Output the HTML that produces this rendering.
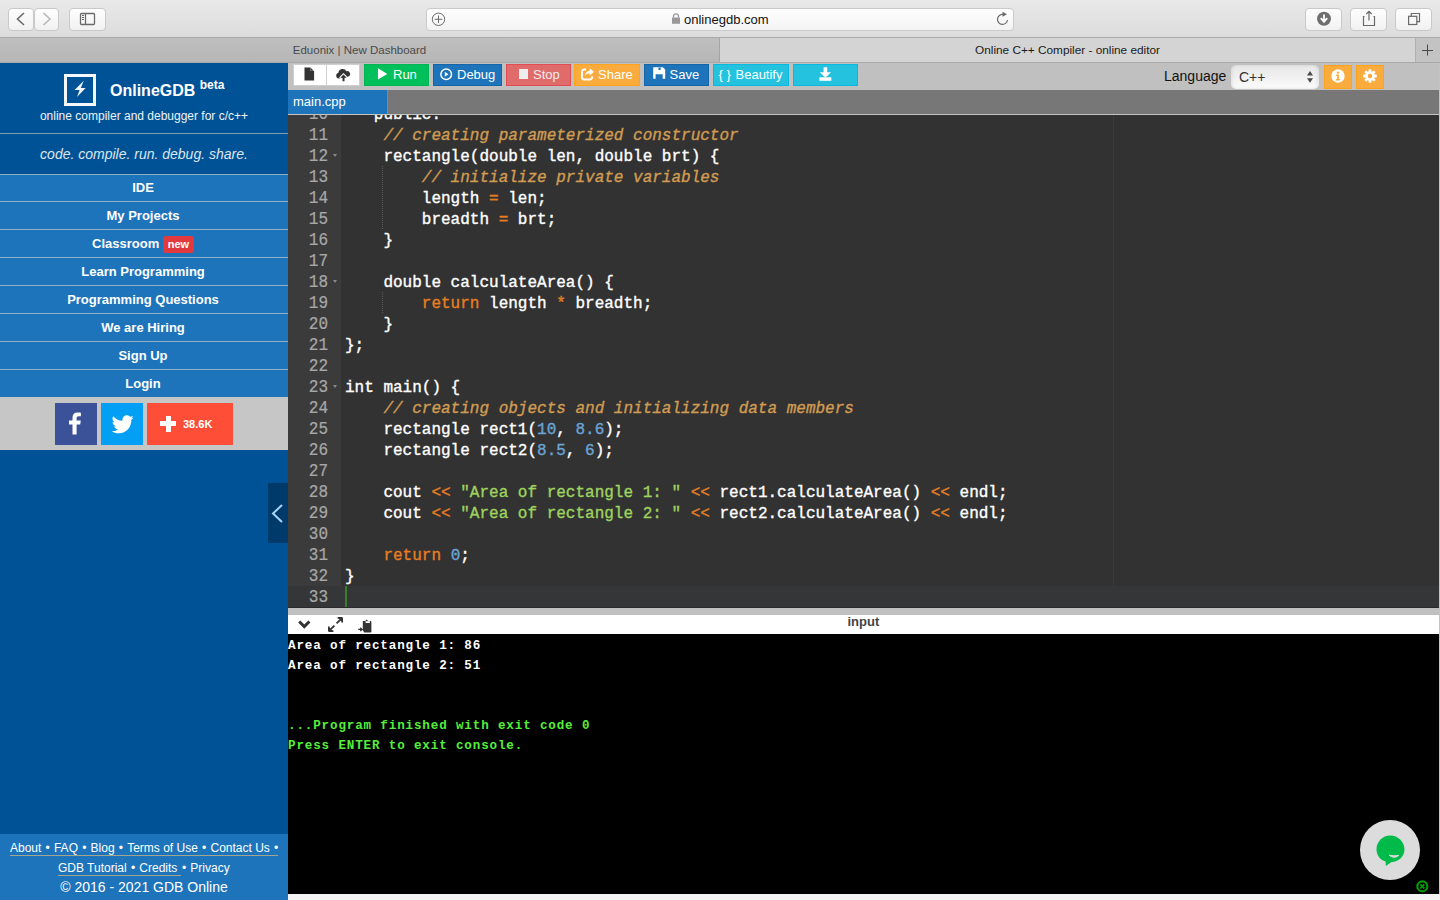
<!DOCTYPE html>
<html><head><meta charset="utf-8">
<style>
*{box-sizing:border-box;margin:0;padding:0}
html,body{width:1440px;height:900px;overflow:hidden;background:#000;font-family:"Liberation Sans",sans-serif}
.a{position:absolute}
/* safari chrome */
#tb{left:0;top:0;width:1440px;height:38px;background:linear-gradient(#e9e9e9,#dcdcdc);border-bottom:1px solid #ababab}
.sbtn{position:absolute;top:8px;height:23px;border:1px solid #c9c9c9;border-radius:4px;background:linear-gradient(#fefefe,#f1f1f1)}
#url{left:426px;top:8px;width:588px;height:23px;border:1px solid #cbcbcb;border-radius:4px;background:linear-gradient(#fff,#f3f3f3);font-size:13px;color:#111}
#tabs{left:0;top:38px;width:1440px;height:25px;background:#d4d4d4;border-bottom:1px solid #a9a9a9}
#tab1{left:0;top:0;width:720px;height:24px;background:linear-gradient(#bfbfbf,#b6b6b6);border-right:1px solid #a5a5a5;font-size:11.5px;color:#4a4a4a;text-align:center;line-height:24px}
#tab2{left:720px;top:0;width:695px;height:24px;font-size:11.8px;color:#1a1a1a;text-align:center;line-height:24px}
#tabplus{left:1415px;top:0;width:25px;height:24px;background:#c3c3c3;border-left:1px solid #b0b0b0}
/* sidebar */
#side{left:0;top:63px;width:288px;height:837px;background:#005296}
#shead{left:0;top:0;width:288px;height:71px;border-bottom:1px solid #7f9fb6}
#tag{left:0;top:71px;width:288px;height:40px;color:#dde6ee;font-style:italic;font-size:14px;text-align:center;line-height:41px}
.mi{position:absolute;left:0;width:288px;padding-right:2px;height:28px;background:#1e74bb;border-top:1px solid #8fb0c6;color:#fff;font-weight:bold;font-size:13px;text-align:center;line-height:27px}
.fl{font-size:12px;color:#fff;white-space:nowrap;line-height:14px;height:15px}
.fl i{font-style:normal;display:inline-block;width:12.6px;text-align:center}
#share{left:0;top:334px;width:288px;height:53px;background:#c6c6c6}
#foot{left:0;top:771px;width:288px;height:66px;background:#1e74bb;color:#fff;text-align:center}
/* toolbar */
#tool{left:288px;top:63px;width:1152px;height:27px;background:#c0c0c0}
.bt{top:3.7px;font-size:13px;color:#fff;white-space:nowrap}
.btn{position:absolute;top:1px;height:22px}
#ftabs{left:288px;top:90px;width:1152px;height:25px;background:#777;border-bottom:1px solid #c4c4c4}
#ed{left:288px;top:115px;width:1152px;height:493px;border-bottom:1px solid #2a2a2a;background:#323232;overflow:hidden}
#gut{left:0;top:0;width:53px;height:492px;background:#3b3b3b}
#gnum{left:0;top:-10px;-webkit-text-stroke:0.2px currentColor;width:40px;text-align:right;color:#a8a8a8}
#ctext{left:57px;top:-10px;-webkit-text-stroke:0.35px currentColor}
.cm{color:#d19c52;font-style:italic}
.ig{left:94px;width:1px;border-left:1px dotted #5a5a5a}
.code div{height:21px}
#gnum div{transform:scaleY(1.1);transform-origin:0 16px}
.fw{position:absolute;left:45px;width:0;height:0;border-left:2.5px solid transparent;border-right:2.5px solid transparent;border-top:3.5px solid #888}
.code{font-family:"Liberation Mono",monospace;font-size:16px;line-height:21px;white-space:pre;color:#fff}
.cons{font-family:"Liberation Mono",monospace;font-weight:bold;font-size:12.6px;letter-spacing:0.84px;line-height:20px;white-space:pre}
#cbar{left:288px;top:608px;width:1152px;height:7px;background:#c0c0c0}
#chead{left:288px;top:615px;width:1152px;height:19px;background:#fff}
#con{left:288px;top:634px;width:1152px;height:260px;background:#000}
#cbot{left:288px;top:894px;width:1152px;height:6px;background:#f3f3f3}
</style></head><body>
<div id="tb" class="a">
  <div class="sbtn" style="left:8px;width:26px"></div>
  <div class="sbtn" style="left:34px;width:25px"></div>
  <div class="sbtn" style="left:69px;width:37px"></div>
  <div id="url" class="a"><span class="a" style="left:257px;top:3px">onlinegdb.com</span></div>
  <div class="sbtn" style="left:1305px;width:37px"></div>
  <div class="sbtn" style="left:1350px;width:37px"></div>
  <div class="sbtn" style="left:1395px;width:37px"></div>
  <svg class="a" style="left:0;top:0" width="1440" height="38">
   <path d="M24 13 L17.5 19 L24 25" fill="none" stroke="#6a6a6a" stroke-width="1.6"/>
   <path d="M43.5 13 L50 19 L43.5 25" fill="none" stroke="#b8b8b8" stroke-width="1.6"/>
   <rect x="80.5" y="13.5" width="14" height="11" rx="1" fill="none" stroke="#6a6a6a" stroke-width="1.3"/>
   <line x1="85.5" y1="13.5" x2="85.5" y2="24.5" stroke="#6a6a6a" stroke-width="1.3"/>
   <rect x="82" y="15" width="2" height="1" fill="#6a6a6a"/><rect x="82" y="17" width="2" height="1" fill="#6a6a6a"/><rect x="82" y="19" width="2" height="1" fill="#6a6a6a"/>
   <circle cx="438.5" cy="19.3" r="6.2" fill="none" stroke="#6a6a6a" stroke-width="1"/>
   <path d="M438.5 15.5v7.6M434.7 19.3h7.6" stroke="#6a6a6a" stroke-width="1"/>
   <path d="M673.5 17.5v-1.2a2.5 2.5 0 0 1 5 0v1.2" fill="none" stroke="#999" stroke-width="1.3"/>
   <rect x="672" y="17.5" width="8" height="6.3" fill="#999"/>
   <path d="M1007.5 20 A5 5 0 1 1 1003.5 14.5" fill="none" stroke="#6a6a6a" stroke-width="1.2"/>
   <path d="M1002.5 11.8 L1007 14.3 L1002.5 16.8z" fill="#6a6a6a"/>
   <circle cx="1324" cy="18.7" r="7" fill="#6e6e6e"/>
   <path d="M1324 14.5v6.5M1320.8 18.2 L1324 21.8 L1327.2 18.2" fill="none" stroke="#fff" stroke-width="1.8"/>
   <path d="M1364.5 16.5h-1v9h11v-9h-1" fill="none" stroke="#6a6a6a" stroke-width="1.2"/>
   <path d="M1369 20.5v-9M1366.3 14 L1369 11.3 L1371.7 14" fill="none" stroke="#6a6a6a" stroke-width="1.2"/>
   <rect x="1408.6" y="16.3" width="8.2" height="8.2" fill="none" stroke="#6a6a6a" stroke-width="1.2"/>
   <path d="M1411.3 16.3v-2.8h8.2v8.2h-2.7" fill="none" stroke="#6a6a6a" stroke-width="1.2"/>
  </svg>
</div>
<div id="tabs" class="a">
  <div id="tab1" class="a">Eduonix | New Dashboard</div>
  <div id="tab2" class="a">Online C++ Compiler - online editor</div>
  <div id="tabplus" class="a"><svg class="a" style="left:6px;top:6px" width="12" height="12"><path d="M5.5 0.5v11M0 6.5h11" stroke="#484848" stroke-width="1"/></svg></div>
</div>

<div id="side" class="a">
  <div id="shead" class="a">
    <div class="a" style="left:64px;top:11px;width:32px;height:32px;border:3px solid #f4f8fc"></div>
    <svg class="a" style="left:74px;top:17px" width="12" height="18"><path d="M9.8 0.8 L0.6 9.9 L5.6 9.9 L3 17 L11.6 8 L6.8 8z" fill="#f2f6fa"/></svg>
    <div class="a" style="left:110px;top:16px;font-size:16px;font-weight:bold;color:#fff;white-space:nowrap">OnlineGDB <sup style="font-size:12px;position:relative;top:-1px">beta</sup></div>
    <div class="a" style="left:0;top:46px;width:288px;text-align:center;font-size:12px;color:#eef2f6">online compiler and debugger for c/c++</div>
  </div>
  <div id="tag" class="a">code. compile. run. debug. share.</div>
  <div class="mi" style="top:111px;height:27px;line-height:25px">IDE</div>
  <div class="mi" style="top:138px">My Projects</div>
  <div class="mi" style="top:166px">Classroom <span style="display:inline-block;vertical-align:top;margin-top:6px;margin-left:0;width:31px;height:17px;line-height:17px;background:#e2393e;border-radius:3px;font-size:11px">new</span></div>
  <div class="mi" style="top:194px">Learn Programming</div>
  <div class="mi" style="top:222px">Programming Questions</div>
  <div class="mi" style="top:250px">We are Hiring</div>
  <div class="mi" style="top:278px">Sign Up</div>
  <div class="mi" style="top:306px">Login</div>
  <div id="share" class="a">
    <div class="a" style="left:55px;top:6px;width:42px;height:42px;background:#3b5198"></div>
    <svg class="a" style="left:68px;top:15px" width="15" height="23"><path d="M4.5 22.5V12.5H1V8.6h3.5V5.8C4.5 2.3 6.4 0.5 9.6 0.5c1.4 0 2.7 0.1 3.3 0.2v3.6h-2.1c-1.7 0-2.2 0.8-2.2 2v2.3h4.2l-0.6 3.9H8.6v10z" fill="#fff"/></svg>
    <div class="a" style="left:101px;top:6px;width:42px;height:42px;background:#039ff5"></div>
    <svg class="a" style="left:112px;top:18px" width="22" height="19" viewBox="0 0 24 20"><path d="M23.6 2.4c-.9.4-1.8.6-2.8.7 1-.6 1.8-1.5 2.1-2.7-.9.6-2 1-3.1 1.2C18.9.6 17.6 0 16.2 0c-2.7 0-4.9 2.2-4.9 4.9 0 .4 0 .8.1 1.1C7.3 5.8 3.7 3.8 1.3.9.9 1.6.6 2.5.6 3.4c0 1.7.9 3.2 2.2 4.1-.8 0-1.6-.2-2.2-.6v.1c0 2.4 1.7 4.4 3.9 4.8-.4.1-.8.2-1.3.2-.3 0-.6 0-.9-.1.6 2 2.4 3.4 4.6 3.4-1.7 1.3-3.8 2.1-6.1 2.1-.4 0-.8 0-1.2-.1 2.2 1.4 4.8 2.2 7.5 2.2 9.1 0 14-7.5 14-14v-.6c1-.7 1.8-1.6 2.5-2.5z" fill="#fff"/></svg>
    <div class="a" style="left:147px;top:6px;width:86px;height:42px;background:#fe4e37"></div>
    <div class="a" style="left:160px;top:24px;width:16px;height:5px;background:#fff"></div>
    <div class="a" style="left:165.5px;top:18.5px;width:5px;height:16px;background:#fff"></div>
    <div class="a" style="left:183px;top:21px;font-size:11px;font-weight:bold;color:#fff">38.6K</div>
  </div>
  <div class="a" style="left:268px;top:420px;width:20px;height:60px;background:#003a6b"></div>
  <svg class="a" style="left:270px;top:441px" width="14" height="19"><path d="M12 1 L3 9.5 L12 18" fill="none" stroke="#a8d4f7" stroke-width="2"/></svg>
  <div id="foot" class="a">
    <div class="a fl" style="left:10px;top:7px;width:268px;border-bottom:1px solid #a4a58e">About<i>•</i>FAQ<i>•</i>Blog<i>•</i>Terms of Use<i>•</i>Contact Us<i>•</i></div>
    <div class="a fl" style="left:58px;top:27px;white-space:nowrap"><span style="border-bottom:1px solid #a4a58e;display:inline-block;line-height:14px;padding-right:3.5px">GDB Tutorial<i>•</i>Credits</span><i style="width:9.5px;text-align:left;padding-left:1.3px">•</i>Privacy</div>
    <div class="a" style="left:0;top:45px;width:288px;text-align:center;font-size:14px;color:#fff">© 2016 - 2021 GDB Online</div>
  </div>
</div>

<div id="tool" class="a">
  <div class="a" style="left:5px;top:1px;width:67px;height:22px;background:#fff;border:1px solid #cfcfcf"></div>
  <div class="a" style="left:38px;top:1px;width:1px;height:22px;background:#cfcfcf"></div>
  <svg class="a" style="left:16px;top:4px" width="11" height="14"><path d="M0.5 0.5h6l3.6 3.6v9.4h-9.6z" fill="#333"/><path d="M6.6 0.2 L10.4 4 L6.6 4z" fill="#fff"/><path d="M6.9 1 L9.6 3.7 L6.9 3.7z" fill="#333"/></svg>
  <svg class="a" style="left:48px;top:3.5px" width="15" height="15" viewBox="0 0 15 15"><path d="M3.3 11.6H3A3 3 0 0 1 2.4 5.7 4.3 4.3 0 0 1 10.4 4.2 2.9 2.9 0 0 1 12 9.8z" fill="#333"/><path d="M7.5 6 L3 10.6 L4.6 11.8 L7.5 8.9 L10.4 11.8 L12 10.6z" fill="#fff"/><path d="M7.5 7.6 L4.3 10.8h2.2v3.4h2v-3.4h2.2z" fill="#333"/></svg>
  <div class="btn" style="left:76px;width:65px;background:#00c05b;border:1px solid #00b552"></div>
  <svg class="a" style="left:90px;top:5px" width="10" height="12"><path d="M0 0.3 L9.3 5.9 L0 11.6z" fill="#fff"/></svg>
  <div class="a bt" style="left:105px">Run</div>
  <div class="btn" style="left:145px;width:69px;background:#1e74bb;border:1px solid #1566a8"></div>
  <svg class="a" style="left:152px;top:4.5px" width="13" height="13"><circle cx="6.2" cy="6.2" r="5.3" fill="none" stroke="#fff" stroke-width="1.5"/><path d="M4.8 3.7 L8.4 6.2 L4.8 8.7z" fill="#fff"/></svg>
  <div class="a bt" style="left:169px">Debug</div>
  <div class="btn" style="left:218px;width:65px;background:#df6b6b;border:1px solid #e24c53"></div>
  <div class="a" style="left:230.5px;top:6px;width:9.5px;height:9.7px;background:#eee"></div>
  <div class="a bt" style="left:245px;color:#f4ecec">Stop</div>
  <div class="btn" style="left:286px;width:66px;background:#f9ab3d;border:1px solid #ffa31a"></div>
  <svg class="a" style="left:293px;top:4.5px" width="14" height="13" viewBox="0 0 14 13"><path d="M5.2 1.5H3.2A2.2 2.2 0 0 0 1 3.7v5.6a2.2 2.2 0 0 0 2.2 2.2h5.6a2.2 2.2 0 0 0 2.2-2.2V8.3" fill="none" stroke="#fff" stroke-width="1.9"/><path d="M8.7 0.2 L13 3.8 L8.7 7.4 V5.4 C6.4 5.4 5 6 4 7.7 C4.3 4.8 6 3 8.7 2.8z" fill="#fff"/></svg>
  <div class="a bt" style="left:310px">Share</div>
  <div class="btn" style="left:356px;width:65px;background:#1e74bb;border:1px solid #1566a8"></div>
  <svg class="a" style="left:364.5px;top:4px" width="13" height="12"><path d="M0.2 0.2h9.6l2.4 2.4v9.2H9.7V7.2H2.6v4.6H0.2z" fill="#fff"/><rect x="5.5" y="0.6" width="2.2" height="2.4" fill="#1e74bb"/></svg>
  <div class="a bt" style="left:381.5px">Save</div>
  <div class="btn" style="left:425px;width:76px;background:#25c2e0;border:1px solid #08b8df"></div>
  <div class="a bt" style="left:430.5px;letter-spacing:0px">{ }</div>
  <div class="a bt" style="left:447.5px">Beautify</div>
  <div class="btn" style="left:505px;width:65px;background:#25c2e0;border:1px solid #08b8df"></div>
  <svg class="a" style="left:531px;top:4px" width="13" height="14"><path d="M4.6 0.2h3.6v5.1h3.8L6.4 10.8 0.8 5.3h3.8z" fill="#fff"/><rect x="0.4" y="10.3" width="11.9" height="3.5" fill="#fff"/></svg>
  <div class="a" style="left:876px;top:5px;font-size:14px;color:#111">Language</div>
  <div class="a" style="left:943px;top:2px;width:88px;height:24px;border-radius:5px;background:linear-gradient(#e6e6e6,#fbfbfb);box-shadow:inset 2px 0 3px rgba(0,0,0,.06),inset -2px 0 3px rgba(0,0,0,.06)"></div>
  <div class="a" style="left:951px;top:6px;font-size:14px;color:#333">C++</div>
  <svg class="a" style="left:1018.5px;top:8px" width="7" height="12"><path d="M3 0 L6 4.6 H0z M0 7.2 H6 L3 11.8z" fill="#4a4a4a"/></svg>
  <div class="btn" style="left:1036px;top:2px;width:28px;height:24px;background:#f9ab3d;border:1px solid #ffa31a"></div>
  <svg class="a" style="left:1043px;top:6px" width="14" height="14"><circle cx="7" cy="7" r="6.7" fill="#fff"/><circle cx="7" cy="3.6" r="1.2" fill="#f9ab3d"/><path d="M5.2 5.6h2.7v4.5h1v1.3H5.1v-1.3h1V7H5.2z" fill="#f9ab3d"/></svg>
  <div class="btn" style="left:1068px;top:2px;width:28px;height:24px;background:#f9ab3d;border:1px solid #ffa31a"></div>
  <svg class="a" style="left:1075px;top:6px" width="14" height="14" viewBox="-7 -7 14 14"><g fill="#fff"><circle r="4.8"/><rect x="-1.4" y="-6.8" width="2.8" height="13.6" rx=".6"/><rect x="-1.4" y="-6.8" width="2.8" height="13.6" rx=".6" transform="rotate(45)"/><rect x="-1.4" y="-6.8" width="2.8" height="13.6" rx=".6" transform="rotate(90)"/><rect x="-1.4" y="-6.8" width="2.8" height="13.6" rx=".6" transform="rotate(135)"/></g><circle r="2.2" fill="#f9ab3d"/></svg>
</div>
<div id="ftabs" class="a"><div class="a" style="left:0;top:0;width:100px;height:24px;background:#1e74bb;border-right:1px solid #8a8780"></div><div class="a" style="left:5px;top:4px;font-size:13px;color:#fff">main.cpp</div></div>
<div id="ed" class="a"><div class="a" style="left:825px;top:0;width:1px;height:492px;background:#3b3b3b"></div>
<div id="gut" class="a"><div class="a" style="left:0;top:471px;width:53px;height:21px;background:#353637"></div></div><div class="a" style="left:0;top:471px;width:1152px;height:21px;background:#353637"></div>
<div class="a" style="left:57px;top:471px;width:2px;height:21px;background:#3a7d2b"></div>
<div class="a ig" style="top:51px;height:63px"></div>
<div class="a ig" style="top:177px;height:21px"></div>
<div class="fw" style="top:38.5px"></div><div class="fw" style="top:164.5px"></div><div class="fw" style="top:269.5px"></div><div id="gnum" class="a code"><div>10</div><div>11</div><div>12</div><div>13</div><div>14</div><div>15</div><div>16</div><div>17</div><div>18</div><div>19</div><div>20</div><div>21</div><div>22</div><div>23</div><div>24</div><div>25</div><div>26</div><div>27</div><div>28</div><div>29</div><div>30</div><div>31</div><div>32</div><div>33</div></div><div id="ctext" class="a code"><div>   public:</div><div>    <span class="cm">// creating parameterized constructor</span></div><div>    rectangle(double len, double brt) {</div><div>        <span class="cm">// initialize private variables</span></div><div>        length <span style="color:#e67e22">=</span> len;</div><div>        breadth <span style="color:#e67e22">=</span> brt;</div><div>    }</div><div></div><div>    double calculateArea() {</div><div>        <span style="color:#e67e22">return</span> length <span style="color:#e67e22">*</span> breadth;</div><div>    }</div><div>};</div><div></div><div>int main() {</div><div>    <span class="cm">// creating objects and initializing data members</span></div><div>    rectangle rect1(<span style="color:#6aa5d8">10</span>, <span style="color:#6aa5d8">8.6</span>);</div><div>    rectangle rect2(<span style="color:#6aa5d8">8.5</span>, <span style="color:#6aa5d8">6</span>);</div><div></div><div>    cout <span style="color:#e67e22">&lt;&lt;</span> <span style="color:#9fd35f">&quot;Area of rectangle 1: &quot;</span> <span style="color:#e67e22">&lt;&lt;</span> rect1.calculateArea() <span style="color:#e67e22">&lt;&lt;</span> endl;</div><div>    cout <span style="color:#e67e22">&lt;&lt;</span> <span style="color:#9fd35f">&quot;Area of rectangle 2: &quot;</span> <span style="color:#e67e22">&lt;&lt;</span> rect2.calculateArea() <span style="color:#e67e22">&lt;&lt;</span> endl;</div><div></div><div>    <span style="color:#e67e22">return</span> <span style="color:#6aa5d8">0</span>;</div><div>}</div><div></div></div></div>
<div id="cbar" class="a"></div>
<div id="chead" class="a">
  <svg class="a" style="left:10px;top:5px" width="13" height="10"><path d="M1.2 1.5 L6.3 6.6 L11.4 1.5" fill="none" stroke="#333" stroke-width="3"/></svg>
  <svg class="a" style="left:39.5px;top:1.5px" width="15" height="15"><path d="M14.2 0.8 L8.6 6.4 M14.2 0.8 h-4.6 M14.2 0.8 v4.6 M0.8 14.2 L6.4 8.6 M0.8 14.2 h4.6 M0.8 14.2 v-4.6" fill="none" stroke="#333" stroke-width="1.8"/><path d="M14.6 0.4 L9.8 0.4 L14.6 5.2z M0.4 14.6 L5.2 14.6 L0.4 9.8z" fill="#333"/></svg>
  <svg class="a" style="left:69.5px;top:3.5px" width="15" height="14"><path d="M5 2h2.4l1.3-1.6L10 2h2.4a1 1 0 0 1 1 1v9.6a1 1 0 0 1-1 1H6.3L4.8 11.2V3a1 1 0 0 1 .2-1z" fill="#333"/><path d="M7.6 2.2h4.3v1.8H7.6z" fill="#fff"/><path d="M0.2 10.4h3.2M2.2 8.8 L4.2 10.4 L2.2 12" fill="none" stroke="#333" stroke-width="1.2"/></svg>
  <div class="a" style="left:559.5px;top:-1.5px;font-size:13px;font-weight:bold;color:#444">input</div>
</div>
<div id="con" class="a">
  <div class="a cons" style="left:0;top:2px;color:#fff">Area of rectangle 1: 86<br>Area of rectangle 2: 51<br><br><br><span style="color:#56ee3a">...Program finished with exit code 0<br>Press ENTER to exit console.</span></div>
  <div class="a" style="left:1072px;top:186px;width:60px;height:60px;border-radius:50%;background:#dcdcdc"></div>
  <svg class="a" style="left:1087.5px;top:201px" width="30" height="32" viewBox="0 0 30 32"><path d="M14.2 0.5C6.5 0.5 0.5 6.8 0.5 14.3c0 5.9 3.4 10.6 9.2 12.3l0.1 4.3 5.4-3.7C23 27 28.5 21.3 28.5 14.3 28.5 6.8 22 0.5 14.2 0.5z" fill="#00bb49"/><path d="M13.2 20.2 Q18 24.2 22.8 20.4 Q18 21.4 13.2 20.2z" fill="#dcdcdc" stroke="#dcdcdc" stroke-width="1" stroke-linejoin="round"/></svg>
  <svg class="a" style="left:1127.5px;top:245.5px" width="13" height="13"><circle cx="6.3" cy="6.3" r="5" fill="none" stroke="#009a00" stroke-width="2.2"/><path d="M4.3 4.3 L8.3 8.3 M8.3 4.3 L4.3 8.3" stroke="#009a00" stroke-width="1.8"/></svg>
</div>
<div id="cbot" class="a"></div>
<div class="a" style="left:1439px;top:63px;width:1px;height:831px;background:#c4c4c4"></div>
</body></html>
